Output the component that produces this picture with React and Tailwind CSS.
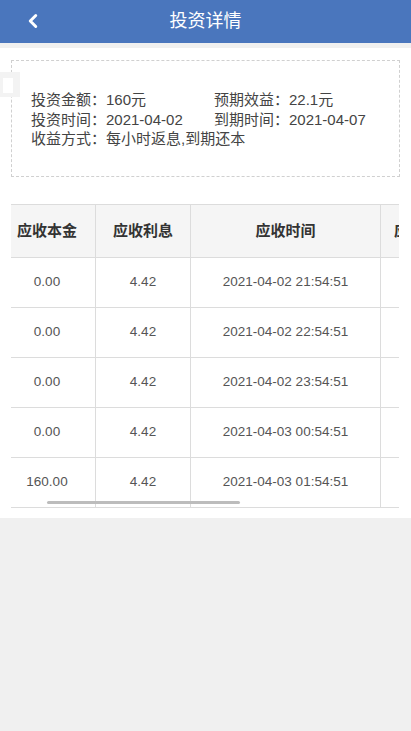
import { ChevronLeft } from "lucide-react";

const rows = [
  { principal: "0.00", interest: "4.42", time: "2021-04-02 21:54:51" },
  { principal: "0.00", interest: "4.42", time: "2021-04-02 22:54:51" },
  { principal: "0.00", interest: "4.42", time: "2021-04-02 23:54:51" },
  { principal: "0.00", interest: "4.42", time: "2021-04-03 00:54:51" },
  { principal: "160.00", interest: "4.42", time: "2021-04-03 01:54:51" },
];

function Cell({ width, children, last }) {
  return (
    <div
      className={`${width} flex shrink-0 items-center justify-center ${
        last ? "" : "border-r border-[#dcdcdc]"
      }`}
    >
      {children}
    </div>
  );
}

export default function App() {
  return (
    <div
      className="min-h-[731px] bg-[#f0f0f0]"
      style={{ fontFamily: '"Liberation Sans", "Noto Sans CJK SC", sans-serif' }}
    >
      <div className="relative flex h-[43px] items-center justify-center bg-[#4a76bd]">
        <ChevronLeft
          className="absolute left-[22px] top-[10px] text-white"
          size={22}
          strokeWidth={3.2}
        />
        <h1 className="text-[18px] text-white">投资详情</h1>
      </div>

      <div className="mt-[5px] bg-white pb-[10px] pt-[12px]">
        <div className="relative">
          <div className="absolute left-0 top-[12px] h-[25px] w-[20px] bg-[#f3f3f3]">
            <div className="ml-[3px] mt-[6px] h-[15px] w-[10px] bg-white" />
          </div>
          <div className="mx-[11px] h-[117px] border border-dashed border-[#d0d0d0] pl-[19px] pt-[29px] text-[15px] leading-[19.5px] text-[#444]">
            <div className="flex">
              <span className="w-[183px]">投资金额：160元</span>
              <span>预期效益：22.1元</span>
            </div>
            <div className="flex">
              <span className="w-[183px]">投资时间：2021-04-02</span>
              <span>到期时间：2021-04-07</span>
            </div>
            <div>收益方式：每小时返息,到期还本</div>
          </div>
        </div>

        <div className="relative ml-[11px] mr-[12px] mt-[27px] overflow-hidden">
          <div className="-ml-[12px] w-[520px]">
            <div className="flex h-[54px] border-y border-[#dcdcdc] bg-[#f5f5f5] text-[15px] font-bold text-[#333]">
              <Cell width="w-[97px]">应收本金</Cell>
              <Cell width="w-[95px]">应收利息</Cell>
              <Cell width="w-[190px]">应收时间</Cell>
              <div className="flex w-[130px] shrink-0 items-center pl-[13px]">应收状态</div>
            </div>
            {rows.map((row, i) => (
              <div
                key={i}
                className="flex h-[50px] border-b border-[#dcdcdc] text-[13.5px] text-[#555]"
              >
                <Cell width="w-[97px]">{row.principal}</Cell>
                <Cell width="w-[95px]">{row.interest}</Cell>
                <Cell width="w-[190px]">{row.time}</Cell>
                <div className="w-[130px] shrink-0" />
              </div>
            ))}
          </div>
          <div className="absolute left-[36px] top-[297px] h-[3px] w-[193px] rounded-full bg-[#bcbcbc]" />
        </div>
      </div>
    </div>
  );
}
